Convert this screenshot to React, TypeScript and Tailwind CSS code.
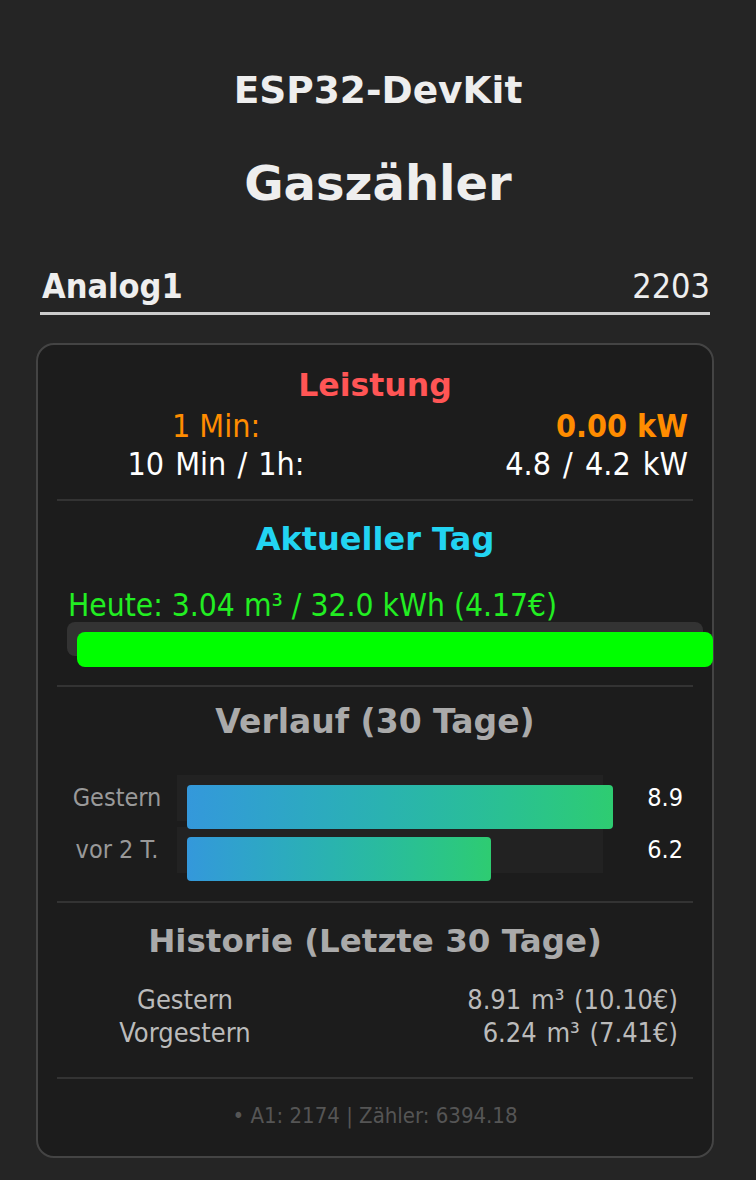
import React from "react";

const cond = "font-['DejaVu_Sans_Condensed','DejaVu_Sans',sans-serif] [font-stretch:condensed]";
const wide = "font-['DejaVu_Sans','Verdana',sans-serif] [font-stretch:normal]";

const verlauf = [
  { label: "Gestern", value: "8.9", pct: 100 },
  { label: "vor 2 T.", value: "6.2", pct: 71.4 },
];

const historie = [
  { label: "Gestern", value: "8.91 m³ (10.10€)" },
  { label: "Vorgestern", value: "6.24 m³ (7.41€)" },
];

const Divider: React.FC<{ className?: string }> = ({ className }) => (
  <div className={"h-[2px] bg-[#333] " + (className ?? "")} />
);

export default function App() {
  return (
    <div className={"min-h-[1180px] bg-[#252525] text-[#eee] pt-[68px] pb-[23px] " + cond}>
      <h1 className={"text-center text-[37.5px] font-bold leading-[44px] text-[#eee] " + wide}>
        ESP32-DevKit
      </h1>
      <h2 className={"mt-[43px] text-center text-[48px] font-bold leading-[56px] text-[#eee] " + wide}>
        Gaszähler
      </h2>

      <div className="ml-[40px] mt-[55px] flex w-[670px] items-center justify-between border-b-[3px] border-[#ccc] pb-[6px] text-[34px] leading-[40px]">
        <span className="pl-[2px] font-bold">Analog1</span>
        <span>2203</span>
      </div>

      <div className="ml-[36px] mt-[28px] w-[678px] rounded-[18px] border-2 border-[#444] bg-[#1c1c1c] px-[19px] pb-[28px] pt-[20px]">
        {/* Leistung */}
        <div className={"text-center text-[31.5px] font-bold leading-[40px] text-[#ff5555] " + wide}>
          Leistung
        </div>
        <div className="mt-[2px] text-[32px] leading-[38px]">
          <div className="flex text-[#ff8c00]">
            <div className="w-1/2 text-center">1 Min:</div>
            <div className="w-1/2 pr-[5px] text-right font-bold">0.00 kW</div>
          </div>
          <div className="flex text-white">
            <div className="w-1/2 text-center [word-spacing:2px]">10 Min / 1h:</div>
            <div className="w-1/2 pr-[5px] text-right [word-spacing:3px]">4.8 / 4.2 kW</div>
          </div>
        </div>

        <Divider className="mt-[16px]" />

        {/* Aktueller Tag */}
        <div className={"mt-[18px] text-center text-[32px] font-bold leading-[40px] text-[#22d4f2] " + wide}>
          Aktueller Tag
        </div>
        <div className="ml-[10px] mr-[-10px] mt-[29px]">
          <div className="pl-[1px] text-[31.5px] leading-[34px] text-[#22ee22]">
            Heute: 3.04 m³ / 32.0 kWh (4.17€)
          </div>
          <div className="h-[34px] w-full rounded-[8px] bg-[#333]">
            <div className="ml-[10px] h-[35px] w-full translate-y-[10px] rounded-[8px] bg-[#00ff00]" />
          </div>
        </div>

        <Divider className="mt-[29px]" />

        {/* Verlauf */}
        <div className={"mt-[15px] text-center text-[33px] font-bold leading-[40px] text-[#aaa] " + wide}>
          Verlauf (30 Tage)
        </div>
        <div className="mt-[33px] flex flex-col gap-[6px]">
          {verlauf.map((r) => (
            <div key={r.label} className="flex items-center">
              <div className="w-[120px] text-center text-[25px] leading-[30px] text-[#999]">{r.label}</div>
              <div className="h-[46px] flex-1 bg-[#222]">
                <div
                  className="ml-[10px] h-[44px] translate-y-[10px] rounded-[4px] bg-gradient-to-r from-[#3498db] to-[#2ecc71]"
                  style={{ width: r.pct + "%" }}
                />
              </div>
              <div className="w-[90px] pr-[10px] text-right text-[25px] leading-[30px] text-white">{r.value}</div>
            </div>
          ))}
        </div>

        <Divider className="mt-[28px]" />

        {/* Historie */}
        <div className={"mt-[18px] text-center text-[32.5px] font-bold leading-[40px] text-[#aaa] " + wide}>
          Historie (Letzte 30 Tage)
        </div>
        <div className="mt-[22px] text-[27px] leading-[33px] text-[#bbb]">
          {historie.map((r) => (
            <div key={r.label} className="flex">
              <div className="w-[256px] text-center">{r.label}</div>
              <div className="flex-1 pr-[15px] text-right [word-spacing:2px]">{r.value}</div>
            </div>
          ))}
        </div>

        <Divider className="mt-[28px]" />

        <div className="mt-[25px] text-center text-[22px] leading-[24px] text-[#555]">
          • A1: 2174 | Zähler: 6394.18
        </div>
      </div>
    </div>
  );
}
